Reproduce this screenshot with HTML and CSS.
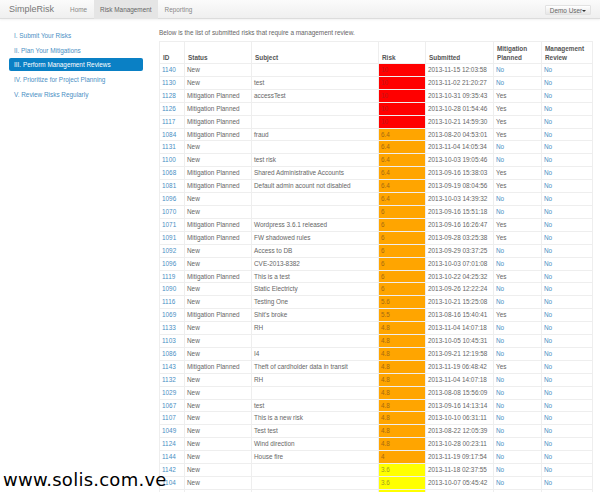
FILE: index.html
```html
<!DOCTYPE html>
<html lang="en">
<head>
    <meta charset="UTF-8">
    <meta name="viewport" content="width=device-width, initial-scale=1.0">
    <title>SimpleRisk</title>
    <link rel="stylesheet" href="styles.css">
</head>
<body>
    <div class="navbar">
        <a class="brand" href="#">SimpleRisk</a>
        <ul class="nav">
            <li><a href="#">Home</a></li>
            <li class="active"><a href="#">Risk Management</a></li>
            <li><a href="#">Reporting</a></li>
        </ul>
        <button class="user-btn">Demo User<span class="caret"></span></button>
    </div>

    <div class="page">
        <ul class="side-nav">
            <li><a href="#">I. Submit Your Risks</a></li>
            <li><a href="#">II. Plan Your Mitigations</a></li>
            <li class="active"><a href="#">III. Perform Management Reviews</a></li>
            <li><a href="#">IV. Prioritize for Project Planning</a></li>
            <li><a href="#">V. Review Risks Regularly</a></li>
        </ul>

        <div class="content">
            <p class="intro">Below is the list of submitted risks that require a management review.</p>
            <table class="risks">
                <colgroup>
                    <col class="col-id"><col class="col-status"><col class="col-subject"><col class="col-risk"><col class="col-date"><col class="col-mit"><col class="col-review">
                </colgroup>
                <thead>
                    <tr><th>ID</th><th>Status</th><th>Subject</th><th>Risk</th><th>Submitted</th><th>Mitigation Planned</th><th>Management Review</th></tr>
                </thead>
                <tbody>
                    <tr><td><a href="#">1140</a></td><td>New</td><td></td><td class="high">10</td><td>2013-11-15 12:03:58</td><td><a href="#">No</a></td><td><a href="#">No</a></td></tr>
                    <tr><td><a href="#">1130</a></td><td>New</td><td>test</td><td class="high">10</td><td>2013-11-02 21:20:27</td><td><a href="#">No</a></td><td><a href="#">No</a></td></tr>
                    <tr><td><a href="#">1128</a></td><td>Mitigation Planned</td><td>accessTest</td><td class="high">10</td><td>2013-10-31 09:35:43</td><td>Yes</td><td><a href="#">No</a></td></tr>
                    <tr><td><a href="#">1126</a></td><td>Mitigation Planned</td><td></td><td class="high">10</td><td>2013-10-28 01:54:46</td><td>Yes</td><td><a href="#">No</a></td></tr>
                    <tr><td><a href="#">1117</a></td><td>Mitigation Planned</td><td></td><td class="high">10</td><td>2013-10-21 14:59:30</td><td>Yes</td><td><a href="#">No</a></td></tr>
                    <tr><td><a href="#">1084</a></td><td>Mitigation Planned</td><td>fraud</td><td class="medium">6.4</td><td>2013-08-20 04:53:01</td><td>Yes</td><td><a href="#">No</a></td></tr>
                    <tr><td><a href="#">1131</a></td><td>New</td><td></td><td class="medium">6.4</td><td>2013-11-04 14:05:34</td><td><a href="#">No</a></td><td><a href="#">No</a></td></tr>
                    <tr><td><a href="#">1100</a></td><td>New</td><td>test risk</td><td class="medium">6.4</td><td>2013-10-03 19:05:46</td><td><a href="#">No</a></td><td><a href="#">No</a></td></tr>
                    <tr><td><a href="#">1068</a></td><td>Mitigation Planned</td><td>Shared Administrative Accounts</td><td class="medium">6.4</td><td>2013-09-16 15:38:03</td><td>Yes</td><td><a href="#">No</a></td></tr>
                    <tr><td><a href="#">1081</a></td><td>Mitigation Planned</td><td>Default admin acount not disabled</td><td class="medium">6.4</td><td>2013-09-19 08:04:56</td><td>Yes</td><td><a href="#">No</a></td></tr>
                    <tr><td><a href="#">1096</a></td><td>New</td><td></td><td class="medium">6.4</td><td>2013-10-03 14:39:32</td><td><a href="#">No</a></td><td><a href="#">No</a></td></tr>
                    <tr><td><a href="#">1070</a></td><td>New</td><td></td><td class="medium">6</td><td>2013-09-16 15:51:18</td><td><a href="#">No</a></td><td><a href="#">No</a></td></tr>
                    <tr><td><a href="#">1071</a></td><td>Mitigation Planned</td><td>Wordpress 3.6.1 released</td><td class="medium">6</td><td>2013-09-16 16:26:47</td><td>Yes</td><td><a href="#">No</a></td></tr>
                    <tr><td><a href="#">1091</a></td><td>Mitigation Planned</td><td>FW shadowed rules</td><td class="medium">6</td><td>2013-09-28 03:25:38</td><td>Yes</td><td><a href="#">No</a></td></tr>
                    <tr><td><a href="#">1092</a></td><td>New</td><td>Access to DB</td><td class="medium">6</td><td>2013-09-29 03:37:25</td><td><a href="#">No</a></td><td><a href="#">No</a></td></tr>
                    <tr><td><a href="#">1096</a></td><td>New</td><td>CVE-2013-8382</td><td class="medium">6</td><td>2013-10-03 07:01:08</td><td><a href="#">No</a></td><td><a href="#">No</a></td></tr>
                    <tr><td><a href="#">1119</a></td><td>Mitigation Planned</td><td>This is a test</td><td class="medium">6</td><td>2013-10-22 04:25:32</td><td>Yes</td><td><a href="#">No</a></td></tr>
                    <tr><td><a href="#">1090</a></td><td>New</td><td>Static Electricty</td><td class="medium">6</td><td>2013-09-26 12:22:24</td><td><a href="#">No</a></td><td><a href="#">No</a></td></tr>
                    <tr><td><a href="#">1116</a></td><td>New</td><td>Testing One</td><td class="medium">5.6</td><td>2013-10-21 15:25:08</td><td><a href="#">No</a></td><td><a href="#">No</a></td></tr>
                    <tr><td><a href="#">1069</a></td><td>Mitigation Planned</td><td>Shit's broke</td><td class="medium">5.5</td><td>2013-08-16 15:40:41</td><td>Yes</td><td><a href="#">No</a></td></tr>
                    <tr><td><a href="#">1133</a></td><td>New</td><td>RH</td><td class="medium">4.8</td><td>2013-11-04 14:07:18</td><td><a href="#">No</a></td><td><a href="#">No</a></td></tr>
                    <tr><td><a href="#">1103</a></td><td>New</td><td></td><td class="medium">4.8</td><td>2013-10-05 10:45:31</td><td><a href="#">No</a></td><td><a href="#">No</a></td></tr>
                    <tr><td><a href="#">1086</a></td><td>New</td><td>I4</td><td class="medium">4.8</td><td>2013-09-21 12:19:58</td><td><a href="#">No</a></td><td><a href="#">No</a></td></tr>
                    <tr><td><a href="#">1143</a></td><td>Mitigation Planned</td><td>Theft of cardholder data in transit</td><td class="medium">4.8</td><td>2013-11-19 06:48:42</td><td>Yes</td><td><a href="#">No</a></td></tr>
                    <tr><td><a href="#">1132</a></td><td>New</td><td>RH</td><td class="medium">4.8</td><td>2013-11-04 14:07:18</td><td><a href="#">No</a></td><td><a href="#">No</a></td></tr>
                    <tr><td><a href="#">1029</a></td><td>New</td><td></td><td class="medium">4.8</td><td>2013-08-08 15:56:09</td><td><a href="#">No</a></td><td><a href="#">No</a></td></tr>
                    <tr><td><a href="#">1067</a></td><td>New</td><td>test</td><td class="medium">4.8</td><td>2013-09-16 14:13:14</td><td><a href="#">No</a></td><td><a href="#">No</a></td></tr>
                    <tr><td><a href="#">1107</a></td><td>New</td><td>This is a new risk</td><td class="medium">4.8</td><td>2013-10-10 06:31:11</td><td><a href="#">No</a></td><td><a href="#">No</a></td></tr>
                    <tr><td><a href="#">1049</a></td><td>New</td><td>Test test</td><td class="medium">4.8</td><td>2013-08-22 12:05:39</td><td><a href="#">No</a></td><td><a href="#">No</a></td></tr>
                    <tr><td><a href="#">1124</a></td><td>New</td><td>Wind direction</td><td class="medium">4.8</td><td>2013-10-28 00:23:11</td><td><a href="#">No</a></td><td><a href="#">No</a></td></tr>
                    <tr><td><a href="#">1144</a></td><td>New</td><td>House fire</td><td class="medium">4</td><td>2013-11-19 09:17:54</td><td><a href="#">No</a></td><td><a href="#">No</a></td></tr>
                    <tr><td><a href="#">1142</a></td><td>New</td><td></td><td class="low">3.6</td><td>2013-11-18 02:37:55</td><td><a href="#">No</a></td><td><a href="#">No</a></td></tr>
                    <tr><td><a href="#">1104</a></td><td>New</td><td></td><td class="low">3.6</td><td>2013-10-07 05:45:42</td><td><a href="#">No</a></td><td><a href="#">No</a></td></tr>
                    <tr><td></td><td></td><td></td><td class="low"></td><td></td><td></td><td></td></tr>
                </tbody>
            </table>
        </div>
    </div>

    <div class="watermark">www.solis.com.ve</div>
</body>
</html>
```

FILE: styles.css
```css
html, body {
    margin: 0;
    padding: 0;
    height: 492px;
    overflow: hidden;
}

body {
    background-color: white;
    font-family: "Liberation Sans", Arial, sans-serif;
    font-size: 6.4px;
    color: #666;
    position: relative;
}

a {
    color: #4a8fc4;
    text-decoration: none;
}

/* top bar */
.navbar {
    height: 18px;
    display: flex;
    align-items: stretch;
    padding-left: 9px;
    background: linear-gradient(#fbfbfb, #efefef);
    border-bottom: 1px solid #dcdcdc;
    box-shadow: 0 1px 2px rgba(0, 0, 0, 0.06);
}

.brand {
    font-size: 9px;
    line-height: 18px;
    color: #777;
    margin-right: 10px;
}

.nav {
    display: flex;
    gap: 1px;
    list-style: none;
    margin: 0;
    padding: 0;
}

.nav a {
    display: block;
    padding: 0 6px;
    line-height: 19px;
    color: #888;
}

.nav .active a {
    background-color: #e5e5e5;
    color: #666;
}

.user-btn {
    margin: 5px 9px 0 auto;
    width: 46px;
    height: 10px;
    padding: 0;
    font-family: inherit;
    font-size: 6.4px;
    color: #666;
    background: linear-gradient(#fff, #e6e6e6);
    border: 1px solid #e2e2e2;
    border-radius: 1px;
}

.caret {
    display: inline-block;
    border-top: 2px solid #333;
    border-left: 2px solid transparent;
    border-right: 2px solid transparent;
    vertical-align: middle;
}

/* page */
.page {
    display: flex;
}

.side-nav {
    width: 134px;
    margin: 0 0 0 9px;
    padding: 10px 0 0;
    list-style: none;
    flex-shrink: 0;
}

.side-nav li {
    margin-bottom: 1.7px;
}

.side-nav a {
    display: block;
    line-height: 13px;
    padding-left: 5px;
    border-radius: 2px;
}

.side-nav .active a {
    background-color: #0a80c5;
    color: white;
}

.content {
    margin-left: 16px;
    width: 433px;
}

.intro {
    margin: 10px 0 4px;
    line-height: 8px;
    color: #666;
}

/* risk table */
.risks {
    width: 433px;
    table-layout: fixed;
    border-collapse: collapse;
    border: 1px solid #eee;
}

.col-id { width: 25px; }
.col-status { width: 67px; }
.col-subject { width: 127px; }
.col-risk { width: 47px; }
.col-date { width: 68px; }
.col-mit { width: 48px; }
.col-review { width: 51px; }

.risks th {
    height: 20px;
    padding: 0 2px 1px 3px;
    vertical-align: bottom;
    text-align: left;
    line-height: 9px;
    font-weight: bold;
    color: #555;
    border-left: 1px solid #eee;
}

.risks td {
    height: 11.9px;
    padding: 0 2px;
    line-height: 11.9px;
    white-space: nowrap;
    border-top: 1px solid #eee;
    border-left: 1px solid #eee;
}

.risks .high { background-color: red; color: #c01818; }
.risks .medium { background-color: orange; color: #a56a10; }
.risks .low { background-color: yellow; color: #a0a020; }

/* image site stamp over the corner */
.watermark {
    position: absolute;
    left: 3px;
    top: 469px;
    font-family: "DejaVu Sans", sans-serif;
    font-size: 18px;
    line-height: 22px;
    letter-spacing: 0.25px;
    color: black;
}
```
